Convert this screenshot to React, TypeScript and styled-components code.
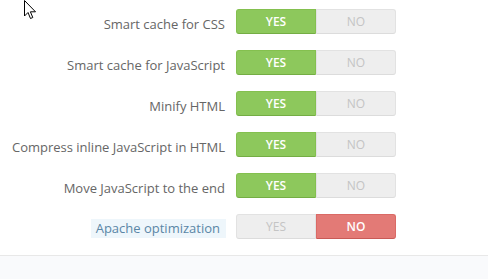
import React, { useState } from "react"
import styled, { createGlobalStyle } from "styled-components"

const GlobalStyle = createGlobalStyle`
  html, body {
    margin: 0;
    padding: 0;
    background: #ffffff;
  }
  body {
    font-family: "Open Sans", "Liberation Sans", sans-serif;
  }
`

const Page = styled.div`
  position: relative;
  width: 488px;
  height: 279px;
  overflow: hidden;
  display: flex;
  flex-direction: column;
`

const Settings = styled.div`
  display: grid;
  grid-template-columns: 226px 160px;
  grid-auto-rows: 25px;
  align-content: start;
  column-gap: 10px;
  row-gap: 16px;
  padding-top: 9px;
  height: 255px;
  box-sizing: border-box;
`

const Label = styled.div<{ $hint?: boolean }>`
  justify-self: end;
  align-self: center;
  font-size: 13px;
  line-height: 19px;
  color: ${p => (p.$hint ? "#5a86a6" : "#666666")};
  background: ${p => (p.$hint ? "#eef6fb" : "transparent")};
  padding: ${p => (p.$hint ? "0 6px 0 5px" : "2px 1px 0 0")};
  margin-top: 3px;
`

const Switch = styled.div`
  display: flex;
  height: 25px;
`

const Option = styled.button<{ $on: boolean; $tone: "yes" | "no" }>`
  flex: 1;
  height: 25px;
  box-sizing: border-box;
  border: 1px solid;
  font-family: inherit;
  font-size: 12px;
  padding: 0;
  cursor: pointer;
  border-radius: ${p => (p.$tone === "yes" ? "3px 0 0 3px" : "0 3px 3px 0")};
  background: ${p => (!p.$on ? "#eeeeee" : p.$tone === "yes" ? "#8dc85c" : "#e37a76")};
  border-color: ${p => (!p.$on ? "#e2e2e2" : p.$tone === "yes" ? "#84c04f" : "#da6a66")};
  border-bottom-color: ${p => (!p.$on ? "#dcdcdc" : p.$tone === "yes" ? "#74ad44" : "#c95a56")};
  color: ${p => (p.$on ? "#ffffff" : "#c4c4c4")};
  font-weight: ${p => (p.$on ? 600 : 400)};
`

const Footer = styled.div`
  flex: 1;
  border-top: 1px solid #e8e8e8;
  background: #f9fafc;
`

const Cursor = styled.svg`
  position: absolute;
  left: 24px;
  top: 0;
`

type Row = { label: string; value: boolean; hint?: boolean }

const initial: Row[] = [
  { label: "Smart cache for CSS", value: true },
  { label: "Smart cache for JavaScript", value: true },
  { label: "Minify HTML", value: true },
  { label: "Compress inline JavaScript in HTML", value: true },
  { label: "Move JavaScript to the end", value: true },
  { label: "Apache optimization", value: false, hint: true },
]

export default function App() {
  const [rows, setRows] = useState(initial)

  const set = (i: number, v: boolean) => {
    setRows(rows.map((r, j) => (j === i ? { ...r, value: v } : r)))
  }

  return (
    <Page>
      <GlobalStyle />
      <Settings>
        {rows.map((r, i) => (
          <React.Fragment key={r.label}>
            <Label $hint={r.hint}>{r.label}</Label>
            <Switch>
              <Option $tone="yes" $on={r.value} onClick={() => set(i, true)}>YES</Option>
              <Option $tone="no" $on={!r.value} onClick={() => set(i, false)}>NO</Option>
            </Switch>
          </React.Fragment>
        ))}
      </Settings>
      <Footer />
      <Cursor width="13" height="20" viewBox="0 0 13 20">
        <path d="M0.5 0.5 L0.5 16 L4 12.5 L6.5 18.5 L8.8 17.5 L6.4 11.8 L11.5 11.8 Z" fill="#ffffff" stroke="#000000" strokeWidth="1" strokeLinejoin="miter" />
      </Cursor>
    </Page>
  )
}
